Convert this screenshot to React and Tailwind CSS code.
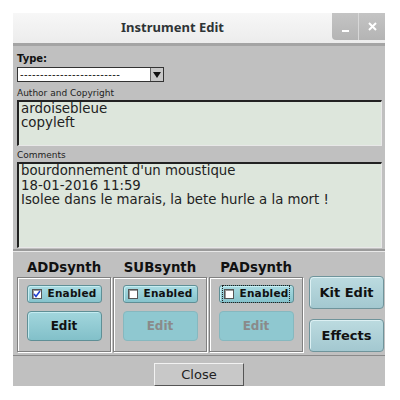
import React from "react";

const font = { fontFamily: '"DejaVu Sans", "Liberation Sans", sans-serif' };

function Check({ checked }) {
  return (
    <span className="inline-flex items-center justify-center w-[10px] h-[10px] bg-white border border-[#555] shadow-[inset_1px_1px_0_#999]">
      {checked && (
        <svg width="8" height="8" viewBox="0 0 8 8">
          <path d="M1 4 L3 6.5 L7 1" stroke="#2040d0" strokeWidth="1.6" fill="none" />
        </svg>
      )}
    </span>
  );
}

function EnabledBtn({ checked, focus }) {
  return (
    <div className="w-[75px] h-[18px] rounded-[3px] border border-[#5f8f96] bg-gradient-to-b from-[#a9dbe2] to-[#86c3cc] flex items-center justify-center shadow-[inset_1px_1px_0_#c8eef2]">
      <div className={"flex items-center gap-[6px] px-[1px] " + (focus ? "outline outline-1 outline-dotted outline-[#222]" : "")}>
        <Check checked={checked} />
        <span className="text-[10.5px] font-bold text-[#111] tracking-[0.2px]">Enabled</span>
      </div>
    </div>
  );
}

function EditBtn({ disabled }) {
  return (
    <div className={"w-[75px] h-[30px] rounded-[4px] border flex items-center justify-center text-[12px] font-bold " + (disabled ? "border-[#86b8bf] bg-[#8fc8d0] text-[#8a8a8a]" : "border-[#5f8f96] bg-gradient-to-b from-[#a2d6dd] to-[#82c0c9] text-[#111] shadow-[inset_1px_1px_0_#c3ebf0]")}>
      Edit
    </div>
  );
}

function SynthBox({ checked, focus, disabled }) {
  return (
    <div className="w-[94px] h-[75px] border border-[#808080] shadow-[inset_1px_1px_0_#ffffff,1px_1px_0_#ffffff] flex flex-col items-center pt-[7px] gap-[8px]">
      <EnabledBtn checked={checked} focus={focus} />
      <EditBtn disabled={disabled} />
    </div>
  );
}

function SideBtn({ label }) {
  return (
    <div className="w-[75px] h-[33px] rounded-[4px] border border-[#6f949b] bg-gradient-to-b from-[#bcdbe0] to-[#a3c8d0] flex items-center justify-center text-[13px] font-bold text-[#111] shadow-[inset_1px_1px_0_#dcf0f3]">
      {label}
    </div>
  );
}

export default function App() {
  return (
    <div className="w-[400px] h-[400px] bg-white pt-[13px] pl-[13px]" style={font}>
      <div className="w-[372px] flex flex-col">
        {/* title bar */}
        <div className="h-[30px] bg-gradient-to-b from-[#f7f7f7] to-[#ececec] flex items-stretch">
          <div className="flex-1 flex items-center justify-center text-[13px] font-bold text-[#2e3436]" style={{ fontFamily: '"Noto Sans", "DejaVu Sans", sans-serif' }}>
            Instrument Edit
          </div>
          <div className="flex h-[27px]">
            <div className="w-[27px] rounded-bl-[4px] bg-gradient-to-b from-[#c4c4c4] to-[#b4b4b4] border-r border-[#d8d8d8] flex items-end justify-center pb-[8px]">
              <div className="w-[7px] h-[2px] bg-white"></div>
            </div>
            <div className="w-[26px] bg-gradient-to-b from-[#c4c4c4] to-[#b4b4b4] flex items-center justify-center">
              <svg width="9" height="9" viewBox="0 0 9 9">
                <path d="M1 1 L8 8 M8 1 L1 8" stroke="white" strokeWidth="2" />
              </svg>
            </div>
          </div>
        </div>
        <div className="h-[3px] bg-[#a4a4a4]"></div>
        {/* top body */}
        <div className="bg-[#c0c0c0] px-[4px] flex flex-col border-b-2 border-[#9a9a9a]">
          <div className="mt-[6px] h-[13px] text-[10px] font-bold leading-[13px] text-[#111]">Type:</div>
          <div className="mt-[2px] w-[147px] h-[15px] bg-white border border-[#333] flex items-center">
            <div className="flex-1 text-[10px] leading-[13px] pl-[2px] overflow-hidden whitespace-nowrap text-[#111] tracking-[0.4px]">-------------------------</div>
            <div className="w-[13px] h-[13px] bg-[#c8c8c8] border-l border-[#666] flex items-center justify-center">
              <svg width="8" height="6" viewBox="0 0 8 6"><path d="M0 0 L8 0 L4 6 Z" fill="#111" /></svg>
            </div>
          </div>
          <div className="mt-[4px] h-[14px] text-[9px] leading-[14px] text-[#222]">Author and Copyright</div>
          <div className="w-[365px] h-[46px] bg-[#dde6dc] border-t-2 border-l-2 border-[#222] border-b border-r border-b-[#e8e8e8] border-r-[#e8e8e8] px-[2px] text-[13.4px] leading-[14px] text-[#222]">
            <div>ardoisebleue</div>
            <div>copyleft</div>
          </div>
          <div className="mt-[2px] h-[14px] text-[9px] leading-[14px] text-[#222]">Comments</div>
          <div className="w-[365px] h-[86px] mb-[1px] bg-[#dde6dc] border-t-2 border-l-2 border-[#222] border-b border-r border-b-[#e8e8e8] border-r-[#e8e8e8] px-[2px] text-[13.3px] leading-[14.5px] text-[#222]">
            <div>bourdonnement d'un moustique</div>
            <div>18-01-2016 11:59</div>
            <div>Isolee dans le marais, la bete hurle a la mort !</div>
          </div>
        </div>
        {/* synth section */}
        <div className="bg-[#c0c0c0] border-t border-[#e8e8e8] px-[4px] pt-[2px] pb-[3px] flex gap-[6px] border-b border-b-[#8a8a8a]">
          <div className="flex gap-[2px]">
            {[
              { n: "ADDsynth", c: true, f: false, d: false },
              { n: "SUBsynth", c: false, f: false, d: true },
              { n: "PADsynth", c: false, f: true, d: true },
            ].map((s) => (
              <div key={s.n} className="flex flex-col items-center">
                <div className="h-[23px] flex items-end pb-[1px] text-[13.3px] font-bold text-[#111] leading-[16px]">{s.n}</div>
                <SynthBox checked={s.c} focus={s.f} disabled={s.d} />
              </div>
            ))}
          </div>
          <div className="flex flex-col gap-[10px] pt-[22px]">
            <SideBtn label="Kit Edit" />
            <SideBtn label="Effects" />
          </div>
        </div>
        {/* footer */}
        <div className="bg-[#c0c0c0] h-[30px] flex items-end justify-center">
          <div className="w-[90px] h-[23px] bg-[#c8c8c8] border border-[#f2f2f2] border-b-[#555] border-r-[#555] flex items-center justify-center text-[13px] text-[#222]">
            Close
          </div>
        </div>
      </div>
    </div>
  );
}
